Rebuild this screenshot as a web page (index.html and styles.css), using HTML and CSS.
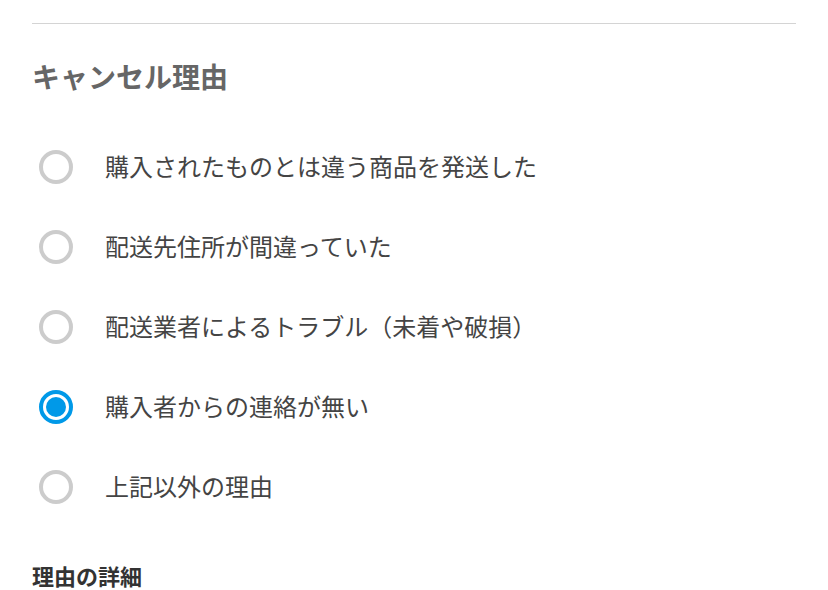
FILE: index.html
```html
<!DOCTYPE html>
<html lang="ja">
<head>
<meta charset="utf-8">
<link rel="stylesheet" href="styles.css">
</head>
<body>
<div class="page">
  <hr class="divider">
  <h2 class="title">キャンセル理由</h2>
  <ul class="options">
    <li class="option"><span class="radio"></span><span class="label">購入されたものとは違う商品を発送した</span></li>
    <li class="option"><span class="radio"></span><span class="label">配送先住所が間違っていた</span></li>
    <li class="option"><span class="radio"></span><span class="label">配送業者によるトラブル（未着や破損）</span></li>
    <li class="option"><span class="radio checked"></span><span class="label">購入者からの連絡が無い</span></li>
    <li class="option"><span class="radio"></span><span class="label">上記以外の理由</span></li>
  </ul>
  <h3 class="subtitle">理由の詳細</h3>
</div>
</body>
</html>
```

FILE: styles.css
```css
html, body {
  margin: 0;
  padding: 0;
  background: #fff;
}
body {
  font-family: "Noto Sans CJK JP", "Noto Sans", sans-serif;
  color: #333;
}
.page {
  padding: 23px 32px 0;
}
.divider {
  margin: 0;
  border: 0;
  height: 1px;
  background: #d4d4d4;
}
.title {
  margin: 32px 0 0;
  font-size: 28px;
  line-height: 40px;
  font-weight: 700;
  color: #666;
}
.options {
  list-style: none;
  margin: 31px 0 0;
  padding: 0;
}
.option {
  height: 80px;
  display: flex;
  align-items: center;
  padding-left: 7px;
}
.radio {
  box-sizing: border-box;
  width: 34px;
  height: 34px;
  border: 4px solid #cccccc;
  border-radius: 50%;
  display: flex;
  align-items: center;
  justify-content: center;
  flex-shrink: 0;
}
.radio.checked {
  border-color: #0099e8;
}
.radio.checked::after {
  content: "";
  width: 20px;
  height: 20px;
  border-radius: 50%;
  background: #0099e8;
}
.label {
  margin-left: 32px;
  padding-bottom: 3px;
  font-size: 24px;
  line-height: 32px;
  color: #444;
  font-weight: 400;
}
.subtitle {
  margin: 33px 0 0;
  font-size: 22px;
  line-height: 30px;
  font-weight: 700;
  color: #333;
}
```
